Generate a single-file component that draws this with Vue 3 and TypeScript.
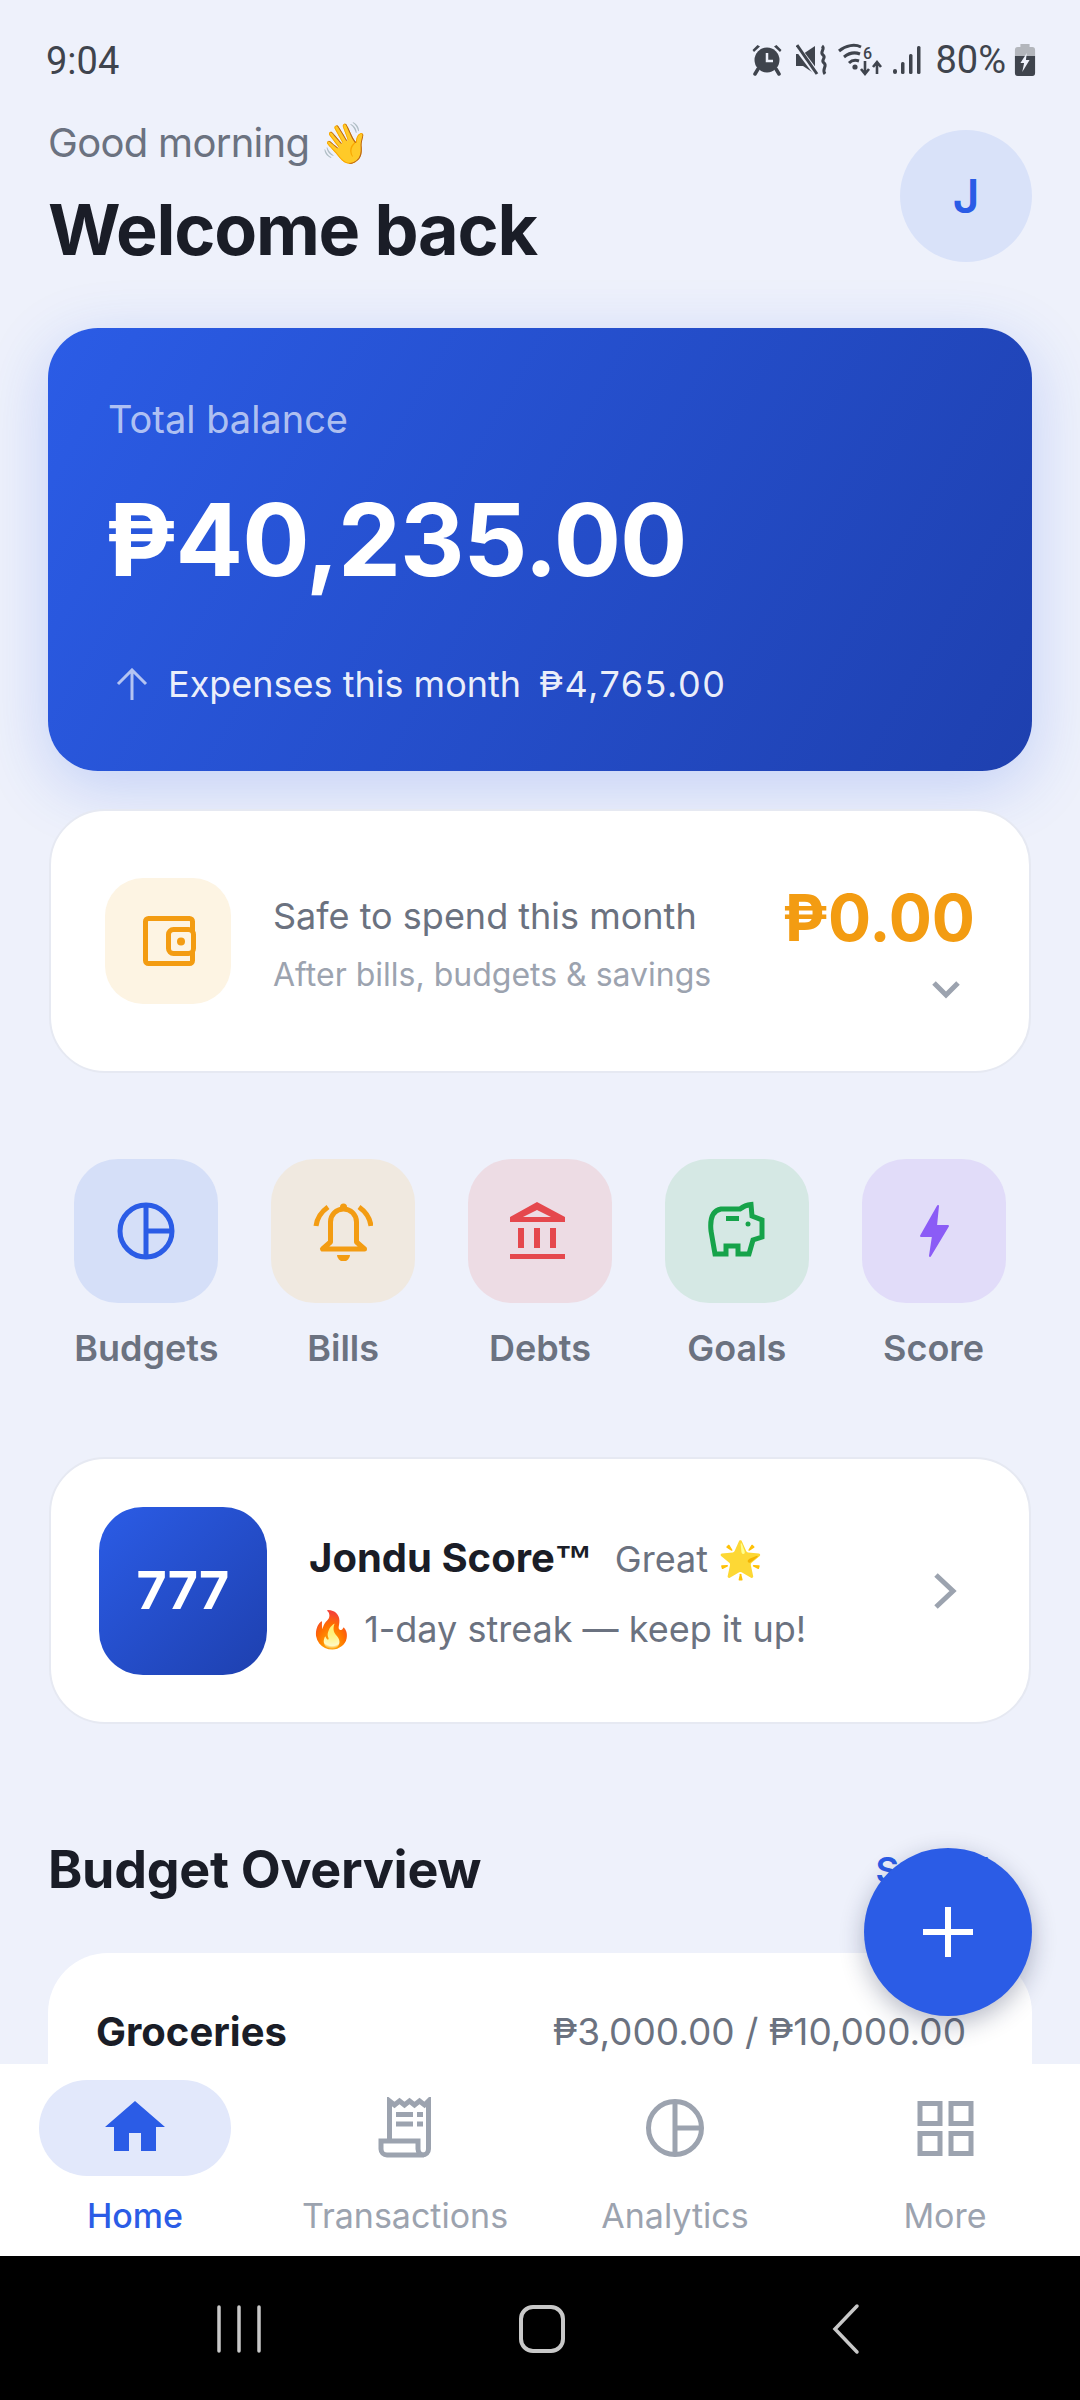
<script setup lang="ts">
interface Quick { label: string; tint: string }
const quick: Quick[] = [
  { label: 'Budgets', tint: 'blue' },
  { label: 'Bills', tint: 'amber' },
  { label: 'Debts', tint: 'red' },
  { label: 'Goals', tint: 'green' },
  { label: 'Score', tint: 'violet' },
]
</script>

<template>
  <div class="page">
    <header class="status">
      <span class="time">9:04</span>
      <div class="status-right">
        <svg class="st" width="32" height="32" viewBox="0 0 32 32">
          <path d="M3 8 9 2.500 6.500 1 1.500 6zM29 8l-6-5.500L25.500 1l5 5z" fill="#3f444d"/>
          <circle cx="16" cy="16" r="12.500" fill="#3f444d"/>
          <path d="M16 9v8h6" stroke="#eef1fb" stroke-width="2.500" fill="none"/>
          <path d="M7 25 4 30M25 25l3 5" stroke="#3f444d" stroke-width="3.500" stroke-linecap="round"/>
        </svg>
        <svg class="st mute" width="32" height="32" viewBox="0 0 32 32">
          <path d="M0 10h7L19 2v28L7 22H0z" fill="#3f444d"/>
          <path d="M0 2l21 28" stroke="#eef1fb" stroke-width="6"/>
          <path d="M1 1l20 29" stroke="#3f444d" stroke-width="3"/>
          <path d="M26 2c4 3-3 6 1 9s-3 5 1 8-3 6 1 11" stroke="#3f444d" stroke-width="3" fill="none"/>
        </svg>
        <svg class="st wifi" width="46" height="36" viewBox="0 0 46 36">
          <path d="M1 9c7-6 16-7 22-4M6 15c5-4 11-5 16-3M11 21c3-3 7-3 10-2" stroke="#3f444d" stroke-width="3" fill="none"/>
          <circle cx="17" cy="25" r="2.600" fill="#3f444d"/>
          <text x="25" y="17" class="st-six">6</text>
          <path d="M27 19v13M23 27l4 5 4-5M39 32V21M35 25l4-5 4 5" stroke="#3f444d" stroke-width="2.600" fill="none"/>
        </svg>
        <svg class="st sig" width="28" height="30" viewBox="0 0 28 30">
          <rect x="0" y="24" width="4" height="5" rx="2" fill="#3f444d"/>
          <rect x="8" y="17" width="3.500" height="12" rx="1.500" fill="#3f444d"/>
          <rect x="16" y="9" width="3.500" height="20" rx="1.500" fill="#3f444d"/>
          <rect x="24" y="1" width="3.500" height="28" rx="1.500" fill="#3f444d"/>
        </svg>
        <span class="pct">80%</span>
        <svg class="st batt" width="22" height="32" viewBox="0 0 24 32" preserveAspectRatio="none">
          <path d="M7 0h10v3h3a3 3 0 0 1 3 3v6H1V6a3 3 0 0 1 3-3h3z" fill="#b3b6bc"/>
          <path d="M1 12h22v17a3 3 0 0 1-3 3H4a3 3 0 0 1-3-3z" fill="#3f444d"/>
          <path d="M14 9 7 19h4l-2 9 8-12h-4z" fill="#eef1fb"/>
        </svg>
      </div>
    </header>

    <main class="content">
      <section class="hero">
        <div>
          <p class="greeting">Good morning 👋</p>
          <h1 class="welcome">Welcome back</h1>
        </div>
        <div class="avatar">J</div>
      </section>

      <section class="balance">
        <p class="balance-label">Total balance</p>
        <p class="balance-amount">₱40,235.00</p>
        <div class="expense">
          <svg width="32" height="32" viewBox="0 0 32 32" fill="none" stroke="#fff" stroke-opacity=".65" stroke-width="3">
            <path d="M16 32V2M2 16 16 2l14 14"/>
          </svg>
          <span>Expenses this month</span>
          <span class="expense-val">₱4,765.00</span>
        </div>
      </section>

      <section class="safe card">
        <div class="safe-icon">
          <svg width="56" height="56" viewBox="0 0 56 56" fill="none" stroke="#f39c12" stroke-width="5">
            <rect x="5.500" y="5.500" width="47" height="45" rx="3"/>
            <rect x="28.500" y="16.500" width="25" height="24" rx="5" fill="#fdf4e3"/>
            <circle cx="41" cy="28.500" r="4" fill="#f39c12" stroke="none"/>
          </svg>
        </div>
        <div class="safe-text">
          <p class="safe-title">Safe to spend this month</p>
          <p class="safe-sub">After bills, budgets &amp; savings</p>
        </div>
        <div class="safe-right">
          <p class="safe-amount">₱0.00</p>
          <svg class="safe-chev" width="30" height="20" viewBox="0 0 30 20" fill="none" stroke="#9ca3af" stroke-width="5">
            <path d="M3 3l12 12L27 3"/>
          </svg>
        </div>
      </section>

      <nav class="quick">
        <div v-for="q in quick" :key="q.label" class="quick-item">
          <div class="quick-box" :class="q.tint">
            <svg v-if="q.tint === 'blue'" width="60" height="60" viewBox="0 0 60 60" fill="none" stroke="#2b5ce6" stroke-width="5">
              <circle cx="30" cy="30" r="26"/>
              <path d="M30 4v52M30 30h26"/>
            </svg>
            <svg v-else-if="q.tint === 'amber'" width="60" height="60" viewBox="0 0 60 60" fill="none" stroke="#f39c12" stroke-width="5">
              <path d="M30.500 8a13 13 0 0 0-13 13v20l-8 7h42l-8-7V21a13 13 0 0 0-13-13z" stroke-linejoin="round"/>
              <circle cx="30.500" cy="6" r="3.500" fill="#f39c12" stroke="none"/>
              <path d="M3 25c1-8 5-14 12-19M58 25c-1-8-5-14-12-19"/>
              <path d="M24 54h13a6.500 6.500 0 0 1-13 0z" fill="#f39c12" stroke="none"/>
            </svg>
            <svg v-else-if="q.tint === 'red'" width="60" height="60" viewBox="0 0 60 60" fill="#e5484d">
              <path fill-rule="evenodd" d="M27 1 55 16v5H0v-5zM27 9 13 16h28z"/>
              <rect x="8" y="27" width="6" height="20"/>
              <rect x="24" y="27" width="6" height="20"/>
              <rect x="40" y="27" width="6" height="20"/>
              <rect x="0" y="53" width="55" height="5"/>
            </svg>
            <svg v-else-if="q.tint === 'green'" width="60" height="60" viewBox="0 0 60 60" fill="none" stroke="#16a34a" stroke-width="5">
              <path d="M14 8h19q5-4 11-4.500L45 15l10 4v17l-9 3-4 14H31v-8H19v8H8L4 30Q2 10 14 8z"/>
              <path d="M19 17.500h13"/>
              <circle cx="41" cy="23" r="2.500" fill="#16a34a" stroke="none"/>
            </svg>
            <svg v-else width="60" height="60" viewBox="0 0 60 60" fill="#8b5cf6" stroke="#8b5cf6" stroke-width="2" stroke-linejoin="round">
              <path d="M34 5 17 35h12l-3 20 18-30H32z"/>
            </svg>
          </div>
          <span class="quick-label">{{ q.label }}</span>
        </div>
      </nav>

      <section class="score card">
        <div class="score-box">777</div>
        <div class="score-text">
          <p class="score-line"><strong>Jondu Score<span class="tm">™</span></strong><span class="score-grade">Great 🌟</span></p>
          <p class="score-streak">🔥 1-day streak — keep it up!</p>
        </div>
        <svg class="score-chev" width="24" height="38" viewBox="0 0 24 38" fill="none" stroke="#9ca3af" stroke-width="5">
          <path d="M3 3l17 16L3 35"/>
        </svg>
      </section>

      <div class="section-head">
        <h2>Budget Overview</h2>
        <span class="see-all">See all</span>
      </div>

      <section class="budget">
        <strong>Groceries</strong>
        <span>₱3,000.00 / ₱10,000.00</span>
      </section>
    </main>

    <button class="fab" type="button" aria-label="Add">
      <svg width="52" height="52" viewBox="0 0 52 52" stroke="#fff" stroke-width="6"><path d="M26 1v50M1 26h50"/></svg>
    </button>

    <nav class="tabs">
      <div class="tab active">
        <div class="tab-icon pill">
          <svg width="62" height="60" viewBox="0 0 62 60" fill="#2b5ce6">
            <path d="M31 3 61 29h-9v24H37V35H25v18H10V29H1z"/>
          </svg>
        </div>
        <span>Home</span>
      </div>
      <div class="tab">
        <div class="tab-icon">
          <svg width="60" height="62" viewBox="0 0 60 62" fill="none" stroke="#9ca3af" stroke-width="5">
            <path d="M14.500 44V4l5 4 5-4 5 4 5-4 5 4 5-4 5 4 4-4v48a6 6 0 0 1-6 6H12a6 6 0 0 1-6-6v-8h37v8a6 6 0 0 0 6 6"/>
            <path d="M21 17.500h17M42 17.500h6M21 27h17M42 27h6"/>
          </svg>
        </div>
        <span>Transactions</span>
      </div>
      <div class="tab">
        <div class="tab-icon">
          <svg width="60" height="60" viewBox="0 0 60 60" fill="none" stroke="#9ca3af" stroke-width="5">
            <circle cx="30" cy="30" r="26.500"/>
            <path d="M30 4v52M30 30h26"/>
          </svg>
        </div>
        <span>Analytics</span>
      </div>
      <div class="tab">
        <div class="tab-icon">
          <svg width="60" height="60" viewBox="0 0 60 60" fill="none" stroke="#9ca3af" stroke-width="5">
            <rect x="5" y="5.500" width="20" height="20"/>
            <rect x="36" y="5.500" width="20" height="20"/>
            <rect x="5" y="35.500" width="20" height="20"/>
            <rect x="36" y="35.500" width="20" height="20"/>
          </svg>
        </div>
        <span>More</span>
      </div>
    </nav>

    <footer class="sysnav">
      <svg width="44" height="50" viewBox="0 0 44 50" stroke="#c8c8c8" stroke-width="3.500" stroke-linecap="round">
        <path d="M2 3v44M22 3v44M42 3v44"/>
      </svg>
      <svg width="50" height="50" viewBox="0 0 50 50" fill="none" stroke="#c8c8c8" stroke-width="4">
        <rect x="4" y="3" width="42" height="44" rx="12"/>
      </svg>
      <svg width="30" height="52" viewBox="0 0 30 52" fill="none" stroke="#c8c8c8" stroke-width="3.500" stroke-linecap="round">
        <path d="M26 3 4 26l22 23"/>
      </svg>
    </footer>
  </div>
</template>

<style scoped>
p, h1, h2 { margin: 0; }
.page {
  width: 1080px; height: 2400px; position: relative; overflow: hidden;
  display: flex; flex-direction: column; background: #eef1fb;
  font-family: Inter, "Noto Sans", sans-serif; color: #1a1d27;
}
.status {
  height: 118px; flex: none; display: flex; justify-content: space-between; align-items: flex-start;
  padding: 38px 44px 0 46px; box-sizing: border-box;
  font-family: Roboto, sans-serif; color: #3f444d; font-size: 38px; line-height: 44px;
}
.time { margin-top: 1px; }
.status-right { display: flex; align-items: center; height: 44px; }
.st { flex: none; margin-left: 13px; }
.st:first-child { margin-left: 0; }
.wifi { margin-left: 10px; }
.sig { margin-left: 9px; }
.st-six { font: 500 16px Roboto, sans-serif; fill: #3f444d; }
.pct { margin-left: 14px; }
.pct + .st { margin-left: 8px; }

.content { flex: 1; min-height: 0; overflow: hidden; padding: 0 48px; }
.hero { display: flex; justify-content: space-between; align-items: flex-start; height: 210px; }
.greeting { font-size: 40px; line-height: 50px; color: #6b7280; letter-spacing: -.7px; }
.welcome { font-size: 70px; line-height: 84px; font-weight: 700; margin-top: 20px; letter-spacing: -1.2px; }
.avatar {
  width: 132px; height: 132px; border-radius: 50%; margin-top: 12px; background: #d9e2f9; color: #2b5ce6;
  display: flex; align-items: center; justify-content: center; font-size: 46px; font-weight: 600;
}
.balance {
  padding: 69px 61px 65px; border-radius: 50px; color: #fff;
  background: linear-gradient(120deg, #2b5ce6, #1e40af);
  box-shadow: 0 16px 64px rgba(43, 92, 230, .22);
}
.balance-label { font-size: 38px; line-height: 44px; color: rgba(255,255,255,.65); margin-left: -1px; }
.balance-amount { font-size: 100px; line-height: 120px; font-weight: 700; margin: 39px 0 0 -4px; letter-spacing: -1px; }
.expense { display: flex; align-items: center; margin-top: 62px; font-size: 36px; line-height: 44px; color: rgba(255,255,255,.92); padding-left: 7px; }
.expense svg { margin-right: 20px; }
.expense-val { margin-left: 18px; letter-spacing: 1.5px; }
.card { background: #fff; border: 2px solid #e6e9f2; box-sizing: border-box; margin: 0 1px; border-radius: 56px; display: flex; align-items: center; }
.safe { margin-top: 38px; height: 264px; padding: 0 54px 0 54px; }
.safe-icon { width: 126px; height: 126px; flex: none; border-radius: 38px; background: #fdf4e3; display: flex; align-items: center; justify-content: center; }
.safe-text { flex: 1; margin-left: 42px; padding-top: 6px; }
.safe-title { font-size: 36px; line-height: 44px; color: #6b7280; }
.safe-sub { font-size: 32px; line-height: 40px; color: #9ca3af; margin-top: 17px; }
.safe-right { display: flex; flex-direction: column; align-items: flex-end; }
.safe-amount { font-size: 64px; line-height: 76px; font-weight: 700; color: #f39c12; }
.safe-chev { margin: 24px 14px 3px 0; }
.quick { display: grid; grid-template-columns: repeat(5, 1fr); margin-top: 86px; }
.quick-item { display: flex; flex-direction: column; align-items: center; }
.quick-box { width: 144px; height: 144px; border-radius: 44px; display: flex; align-items: center; justify-content: center; }
.blue { background: #d5dff8; }
.amber { background: #f0e9e0; }
.red { background: #eddce4; }
.green { background: #d5e8e4; }
.violet { background: #e1dcf9; }
.quick-label { font-size: 36px; line-height: 40px; font-weight: 600; color: #6b7280; margin-top: 25px; }
.score { margin-top: 89px; height: 267px; padding: 0 72px 0 48px; }
.score-box {
  width: 168px; height: 168px; flex: none; border-radius: 44px; color: #fff; font-size: 52px; font-weight: 700;
  background: linear-gradient(135deg, #2b5ce6, #1e40af); display: flex; align-items: center; justify-content: center;
}
.score-text { flex: 1; margin-left: 42px; padding-top: 5px; }
.score-line { font-size: 40px; line-height: 48px; display: flex; align-items: baseline; }
.score-line strong { font-weight: 700; }
.tm { font: 700 38px "Liberation Sans", sans-serif; }
.score-grade { font-size: 36px; color: #6b7280; margin-left: 22px; }
.score-streak { font-size: 36px; line-height: 48px; color: #6b7280; margin-top: 22px; }
.section-head { display: flex; justify-content: space-between; align-items: center; margin-top: 116px; height: 60px; padding-right: 42px; }
.section-head h2 { font-size: 52px; line-height: 60px; font-weight: 700; letter-spacing: -.3px; }
.see-all { font-size: 36px; font-weight: 600; color: #2b5ce6; }
.budget {
  margin-top: 53px; background: #fff; border-radius: 60px 60px 0 0; height: 300px; box-sizing: border-box;
  padding: 56px 66px 0 48px; display: flex; justify-content: space-between; align-items: flex-start; line-height: 46px;
}
.budget strong { font-size: 40px; font-weight: 700; }
.budget span { font-size: 37px; color: #6b7280; }
.fab {
  position: absolute; left: 864px; top: 1848px; width: 168px; height: 168px; border: 0; padding: 0; border-radius: 50%;
  background: #2b5ce6; display: flex; align-items: center; justify-content: center; box-shadow: 0 8px 24px rgba(20, 30, 70, .3);
}
.tabs { height: 192px; flex: none; background: #fff; display: grid; grid-template-columns: repeat(4, 270px); position: relative; }
.tab { display: flex; flex-direction: column; align-items: center; padding-top: 16px; font-size: 34px; line-height: 40px; color: #9ca3af; }
.tab.active { color: #2b5ce6; font-weight: 500; }
.tab-icon { width: 192px; height: 96px; display: flex; align-items: center; justify-content: center; margin-bottom: 20px; }
.pill { background: #e2e8fb; border-radius: 48px; }
.sysnav { height: 144px; flex: none; background: #000; display: flex; align-items: center; padding: 2px 0 0 217px; box-sizing: border-box; }
.sysnav svg { flex: none; }
.sysnav svg:nth-child(2) { margin-left: 256px; }
.sysnav svg:nth-child(3) { margin-left: 264px; }
</style>

<style>
html, body { margin: 0; padding: 0; }
</style>
